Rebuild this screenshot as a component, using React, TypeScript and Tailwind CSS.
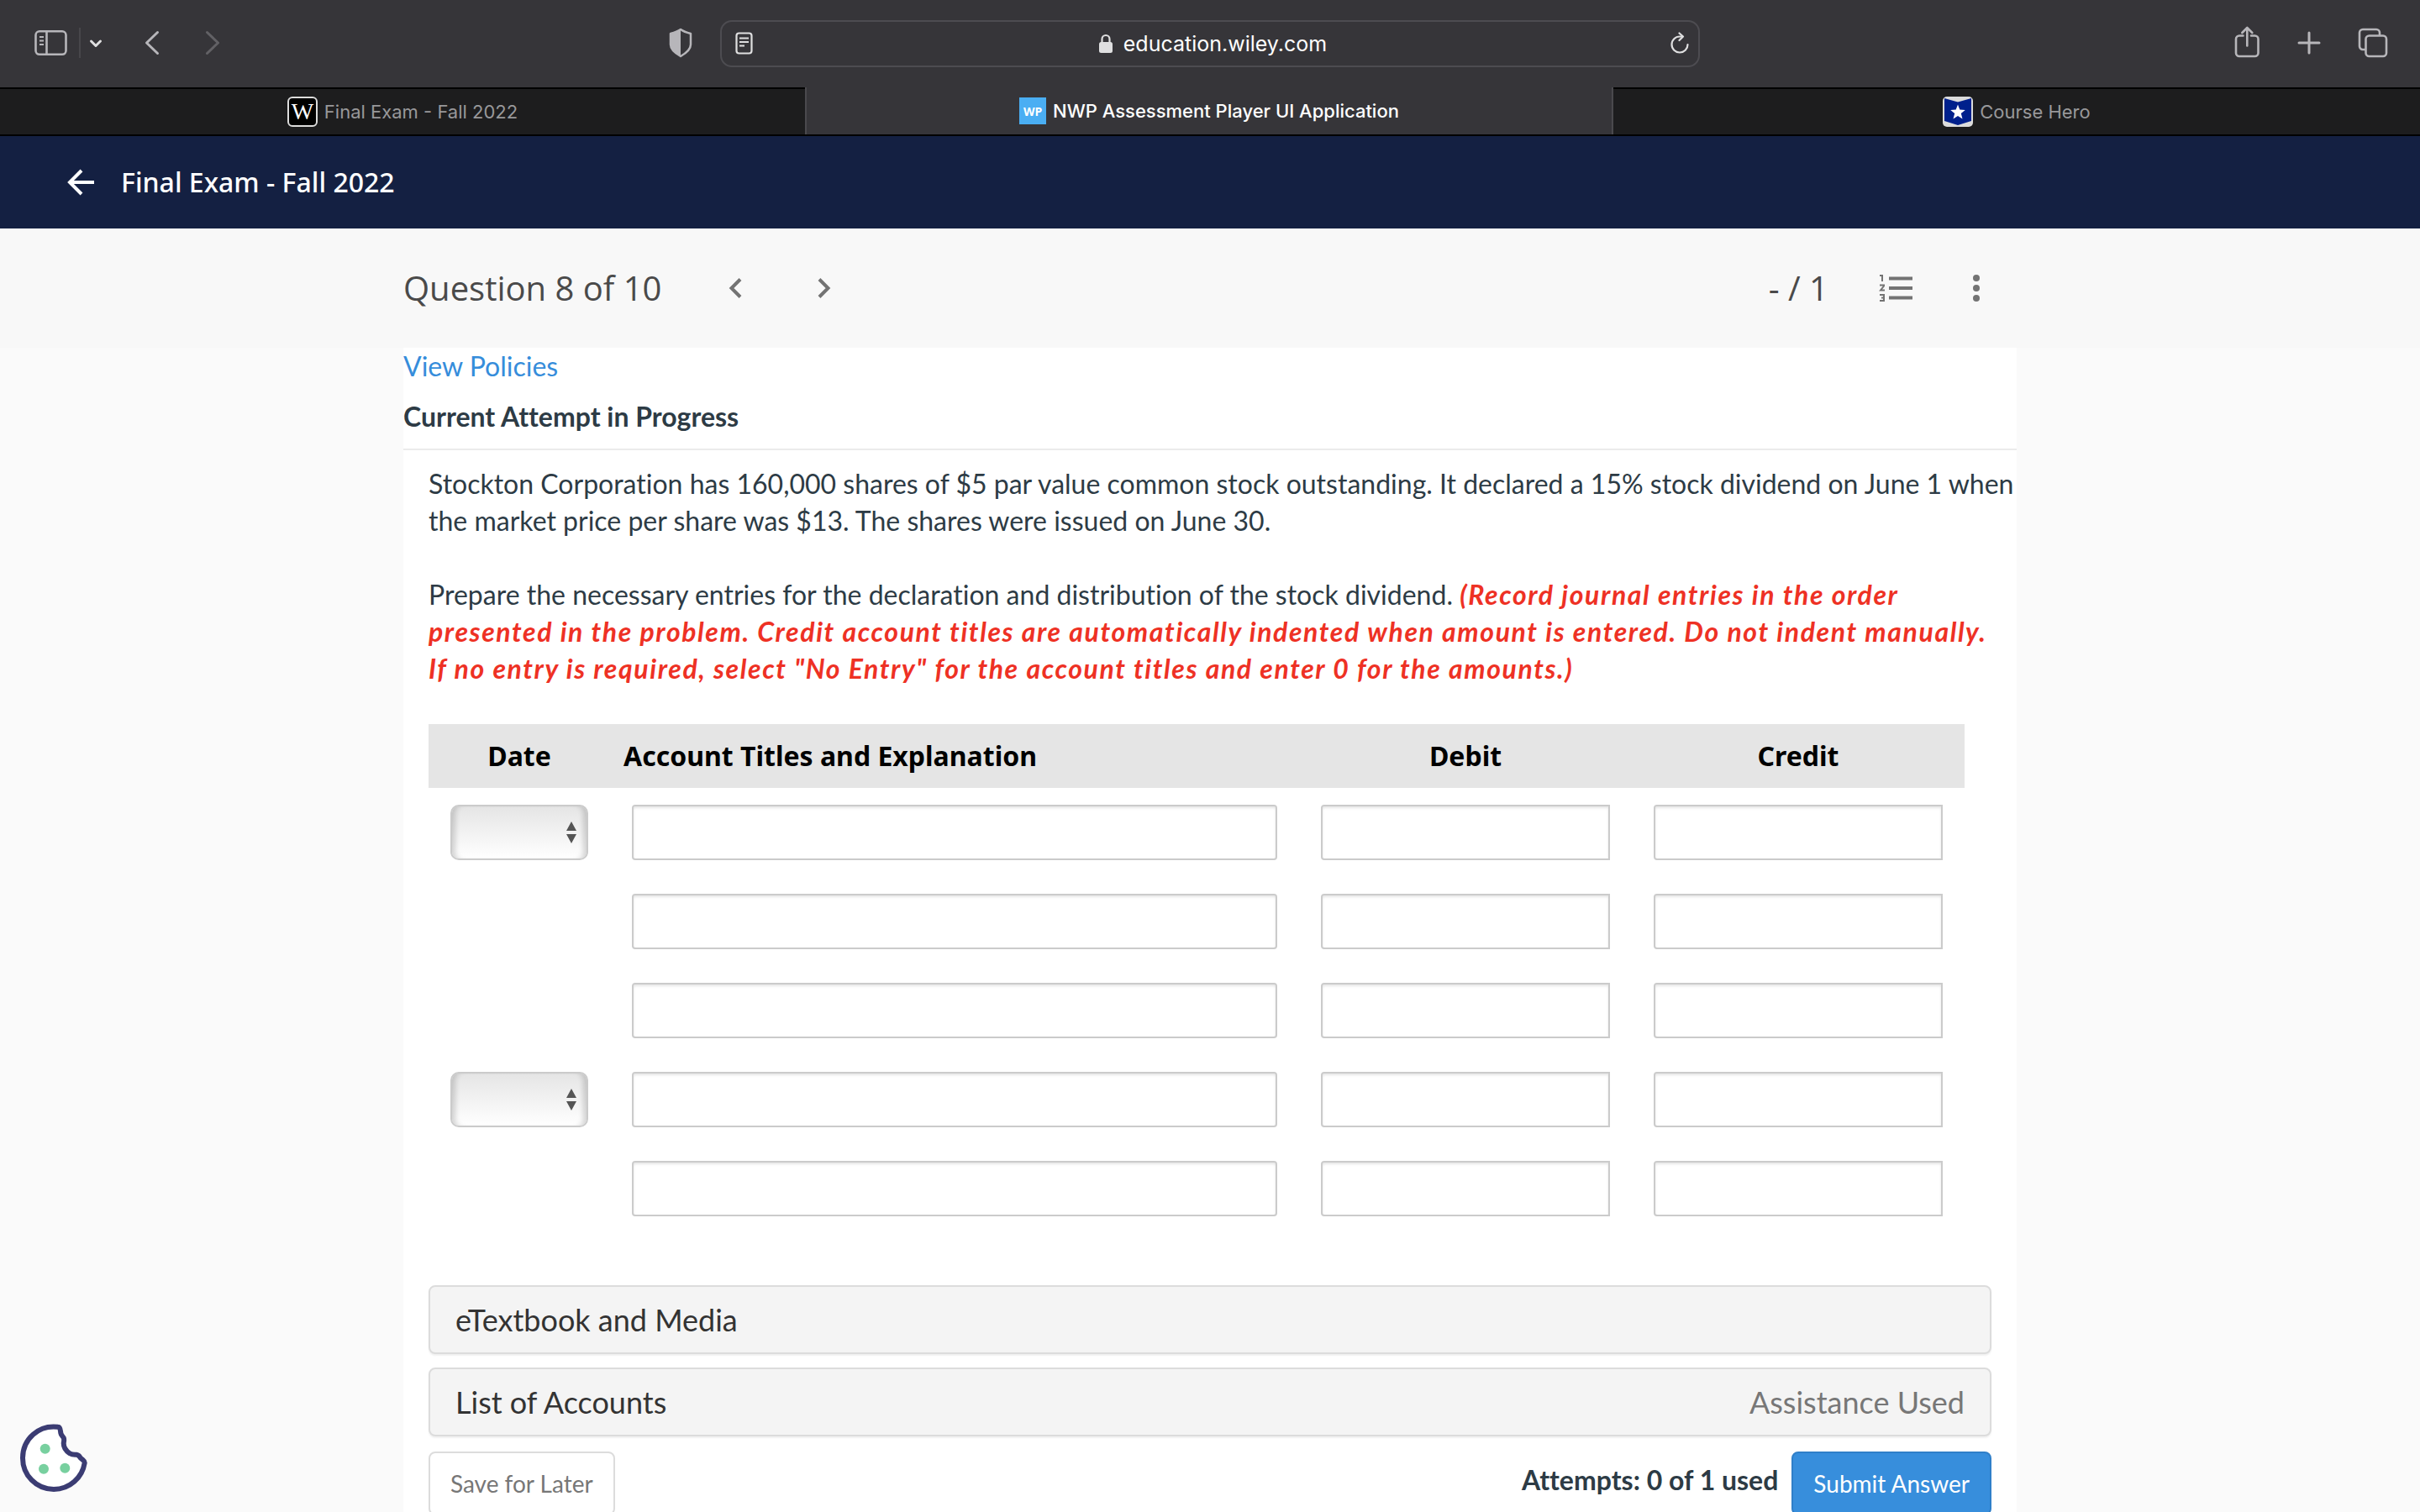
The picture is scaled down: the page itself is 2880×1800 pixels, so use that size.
import type { ReactNode } from 'react';

interface BrowserTabProps {
  title: string;
  icon: ReactNode;
  active?: boolean;
}

interface PanelProps {
  title: string;
  note?: string;
}

// rows that start a new journal entry carry the date drop-down
const journalRows = [
  { id: 1, hasDate: true },
  { id: 2, hasDate: false },
  { id: 3, hasDate: false },
  { id: 4, hasDate: true },
  { id: 5, hasDate: false },
];

const inputClass =
  'block h-[66px] w-full border-2 border-[#cbcbcb] bg-white px-3 text-[28px] shadow-[inset_0_2px_3px_rgba(0,0,0,0.1)] outline-none';

function BrowserToolbar() {
  return (
    <div className="grid h-[104px] shrink-0 grid-cols-[1fr_1166px_1fr] items-center bg-[#363539] text-[#b7b6ba]">
      <div className="flex items-center pb-0.5 pl-10 pr-8">
        <button type="button" aria-label="Show sidebar">
          <svg className="h-8 w-10" viewBox="0 0 40 32" fill="none" stroke="currentColor" strokeWidth="2.6">
            <rect x="2.500" y="2.3" width="36" height="27.500" rx="4.5" />
            <path d="M15.500 2.500v27" />
            <path d="M7 9h5M7 13.500h5M7 18h5" strokeWidth="1.800" />
          </svg>
        </button>
        <span className="ml-[14px] h-9 w-[2px] bg-[#48474b]" />
        <button type="button" aria-label="Tab groups" className="ml-[10px]">
          <svg className="h-4 w-4" viewBox="0 0 16 16" fill="none" stroke="#dfdfe0" strokeWidth="3" strokeLinecap="round" strokeLinejoin="round">
            <path d="M2.500 6 8 11.500 13.500 6" />
          </svg>
        </button>
        <button type="button" aria-label="Back" className="ml-[50px]">
          <svg className="h-8 w-5" viewBox="0 0 20 32" fill="none" stroke="currentColor" strokeWidth="3" strokeLinecap="round" strokeLinejoin="round">
            <path d="M15.500 3.500 2.500 16l13 12.500" />
          </svg>
        </button>
        <button type="button" aria-label="Forward" className="ml-[52px] text-[#626165]">
          <svg className="h-8 w-5" viewBox="0 0 20 32" fill="none" stroke="currentColor" strokeWidth="3" strokeLinecap="round" strokeLinejoin="round">
            <path d="m2.500 3.500 13 12.500-13 12.500" />
          </svg>
        </button>
        <button type="button" aria-label="Privacy report" className="ml-auto">
          <svg className="h-9 w-[30px]" viewBox="0 0 30 36" fill="none">
            <path d="M15 2c4 3 8 4 12 5v13c0 6-5 10-12 14C8 30 3 26 3 20V7c4-1 8-2 12-5Z" stroke="currentColor" strokeWidth="2.500" strokeLinejoin="round" />
            <path d="M15 2v32C8 30 3 26 3 20V7c4-1 8-2 12-5Z" fill="currentColor" />
          </svg>
        </button>
      </div>

      <div className="flex h-14 items-center justify-between rounded-[14px] border-2 border-[#4d4c51] pl-4 pr-[10px] text-[#dfdfe0]">
        <button type="button" aria-label="Reader">
          <svg className="h-7 w-6" viewBox="0 0 24 28" fill="none" stroke="currentColor" strokeWidth="2.200">
            <rect x="1.500" y="1.500" width="18" height="24" rx="3" />
            <path d="M5 7.500h11M5 12h11M5 16.500h6" strokeWidth="2" />
          </svg>
        </button>
        <div className="flex items-center gap-3">
          <svg className="h-6 w-[18px]" viewBox="0 0 18 24" fill="none">
            <rect x="1" y="10" width="16" height="13" rx="2.500" fill="currentColor" />
            <path d="M4.500 11V6.500a4.500 4.500 0 0 1 9 0V11" stroke="currentColor" strokeWidth="2.200" />
          </svg>
          <span className="font-[Inter,sans-serif] text-[25px] leading-8 text-white">education.wiley.com</span>
        </div>
        <button type="button" aria-label="Reload">
          <svg className="h-7 w-6" viewBox="0 0 24 28" fill="none" stroke="currentColor" strokeWidth="2.200" strokeLinecap="round" strokeLinejoin="round">
            <path d="M21.500 15a9.500 9.500 0 1 1-9.500-9.500h3" />
            <path d="m11.500 1.500 4.500 4-4.500 4.500" />
          </svg>
        </button>
      </div>

      <div className="flex items-center justify-end gap-[42px] pb-0.5 pr-[38px]">
        <button type="button" aria-label="Share">
          <svg className="h-10 w-8" viewBox="0 0 32 40" fill="none" stroke="currentColor" strokeWidth="2.600" strokeLinecap="round" strokeLinejoin="round">
            <path d="M11.500 11.500H7a4 4 0 0 0-4 4v16.500a4 4 0 0 0 4 4h18.500a4 4 0 0 0 4-4V15.500a4 4 0 0 0-4-4H21" />
            <path d="M16.300 23.500V2M10.300 8l6-6 6 6" />
          </svg>
        </button>
        <button type="button" aria-label="New tab">
          <svg className="h-8 w-8" viewBox="0 0 32 32" fill="none" stroke="currentColor" strokeWidth="3" strokeLinecap="round">
            <path d="M16 4v24M4 16h24" />
          </svg>
        </button>
        <button type="button" aria-label="Tab overview">
          <svg className="h-9 w-9" viewBox="0 0 36 36" fill="none" stroke="currentColor" strokeWidth="2.600">
            <rect x="9.500" y="9.500" width="24.500" height="24.500" rx="4" />
            <path d="M9.500 26H6a4 4 0 0 1-4-4V6a4 4 0 0 1 4-4h16a4 4 0 0 1 4 4v3.500" />
          </svg>
        </button>
      </div>
    </div>
  );
}

function BrowserTab({ title, icon, active }: BrowserTabProps) {
  return (
    <button
      type="button"
      className={
        active
          ? 'flex items-center justify-center gap-2 border-x-2 border-[#4a494d] bg-[#363539] font-medium text-white'
          : 'flex items-center justify-center gap-2 border-t-2 border-black bg-[#1d1d1e] text-[#98989a]'
      }
    >
      {icon}
      <span className="font-[Inter,sans-serif] text-[22px] leading-7">{title}</span>
    </button>
  );
}

function BrowserTabs() {
  return (
    <div className="grid h-[58px] shrink-0 grid-cols-[958px_1fr_960px] border-b-2 border-black">
      <BrowserTab
        title="Final Exam - Fall 2022"
        icon={
          <span className="flex h-9 w-9 items-center justify-center rounded-md border-2 border-[#dcdcdc] bg-black font-['Liberation_Serif',serif] text-[28px] leading-8 text-white">
            W
          </span>
        }
      />
      <BrowserTab
        title="NWP Assessment Player UI Application"
        active
        icon={
          <span className="flex h-8 w-8 items-center justify-center bg-[#4aaef3] font-['Open_Sans',sans-serif] text-[14px] font-bold text-white">
            WP
          </span>
        }
      />
      <BrowserTab
        title="Course Hero"
        icon={
          <svg className="h-9 w-9" viewBox="0 0 36 36">
            <rect width="36" height="36" rx="5" fill="#dcdcdc" />
            <path d="M2 2l16 4.500L34 2v27l-16 5L2 29Z" fill="#00208c" />
            <path d="m18 9.500 2.300 6 6.500.4-5 4.100 1.700 6.500L18 23l-5.500 3.500 1.700-6.500-5-4.100 6.500-.4Z" fill="#fff" />
          </svg>
        }
      />
    </div>
  );
}

function QuestionBar() {
  return (
    <div className="shrink-0 bg-[#f8f8f8]">
      <div className="mx-auto flex h-[142px] max-w-[1920px] items-center font-['Open_Sans',sans-serif] text-[40px] text-[#4a4a4a]">
        <h2>Question 8 of 10</h2>
        <button type="button" aria-label="Previous question" className="ml-20">
          <svg className="h-6 w-4" viewBox="0 0 16 24" fill="none" stroke="#737373" strokeWidth="4">
            <path d="M14 1.500 3.500 12 14 22.500" />
          </svg>
        </button>
        <button type="button" aria-label="Next question" className="ml-[90px]">
          <svg className="h-6 w-4" viewBox="0 0 16 24" fill="none" stroke="#737373" strokeWidth="4">
            <path d="m2 1.500 10.500 10.500L2 22.500" />
          </svg>
        </button>
        <span className="ml-auto">- / 1</span>
        <button type="button" aria-label="Question list" className="ml-[60px]">
          <svg className="h-8 w-10" viewBox="0 0 40 32" fill="none" stroke="#737373">
            <path d="M12 4.500h28M12 16h28M12 27.500h28" strokeWidth="4" />
            <path d="M1 1h3v7M1 12.500h5v1l-4 5h5M1 24h5v7H1M3 27.500h3" strokeWidth="2" />
          </svg>
        </button>
        <button type="button" aria-label="More options" className="ml-[72px] mr-[44px]">
          <svg className="h-8 w-2" viewBox="0 0 8 32" fill="#737373">
            <circle cx="4" cy="4" r="4" />
            <circle cx="4" cy="16" r="4" />
            <circle cx="4" cy="28" r="4" />
          </svg>
        </button>
      </div>
    </div>
  );
}

function DateSelect({ row }: { row: number }) {
  return (
    <div className="relative">
      <select
        aria-label={`Date, row ${row}`}
        className="block h-[66px] w-full appearance-none rounded-[10px] border-2 border-[#cbcbcb] bg-linear-to-b from-[#e5e5e5] to-white shadow-[inset_8px_0_6px_-4px_rgba(0,0,0,0.16),inset_-8px_0_6px_-4px_rgba(0,0,0,0.16)] outline-none"
      >
        <option></option>
      </select>
      <svg className="pointer-events-none absolute right-[14px] top-5 h-[26px] w-3" viewBox="0 0 12 26" fill="#555">
        <path d="M6 0l6 11H0ZM6 26l6-11H0Z" />
      </svg>
    </div>
  );
}

function JournalTable() {
  return (
    <table className="w-[calc(100%-32px)] table-fixed">
      <colgroup>
        <col className="w-[216px]" />
        <col />
        <col className="w-[396px]" />
        <col className="w-[396px]" />
      </colgroup>
      <thead>
        <tr className="h-[76px] bg-[#e5e5e5] font-['Noto_Sans',sans-serif] text-[32px] text-black">
          <th scope="col">Date</th>
          <th scope="col" className="pl-4 text-left">Account Titles and Explanation</th>
          <th scope="col">Debit</th>
          <th scope="col">Credit</th>
        </tr>
      </thead>
      <tbody>
        {journalRows.map((row) => (
          <tr key={row.id}>
            <td className="px-[26px] py-5">{row.hasDate && <DateSelect row={row.id} />}</td>
            <td className="px-[26px] py-5">
              <input type="text" aria-label={`Account title, row ${row.id}`} className={`${inputClass} rounded`} />
            </td>
            <td className="px-[26px] py-5">
              <input type="text" aria-label={`Debit, row ${row.id}`} className={`${inputClass} rounded-l`} />
            </td>
            <td className="px-[26px] py-5">
              <input type="text" aria-label={`Credit, row ${row.id}`} className={`${inputClass} rounded-l`} />
            </td>
          </tr>
        ))}
      </tbody>
    </table>
  );
}

function Panel({ title, note }: PanelProps) {
  return (
    <button
      type="button"
      className="flex h-[82px] w-full items-center justify-between rounded-lg border-2 border-[#dcdcdc] bg-[#f4f4f4] px-[30px] text-[36px] text-[#333] shadow-[0_2px_2px_rgba(0,0,0,0.06)]"
    >
      <span>{title}</span>
      {note && <span className="text-[#777]">{note}</span>}
    </button>
  );
}

function CookieButton() {
  return (
    <button type="button" aria-label="Cookie settings" className="absolute bottom-[22px] left-[22px]">
      <svg className="h-[84px] w-[84px]" viewBox="0 0 84 84">
        <path
          d="M47 4.800C24 2 5 19 5 41.700 5 62 21 79 42 79c19 0 34-14 36.700-31.500.3-2.500-2.700-3.500-4.700-5.800-1.500-1.700-2-3.700-5-4-3 .3-5 .3-8-1.500-4.500-3-7.300-7-7.300-12 .3-2.500 1-4.500 0-6.500-1.200-2-3-3-3.400-5.700C49.700 8.500 50 5 47 4.800Z"
          fill="#fff"
          stroke="#3b3c73"
          strokeWidth="6"
          strokeLinejoin="round"
        />
        <circle cx="31.700" cy="30.700" r="6" fill="#78d09f" />
        <circle cx="30" cy="54.700" r="6" fill="#78d09f" />
        <circle cx="55.300" cy="53.700" r="6" fill="#78d09f" />
      </svg>
    </button>
  );
}

export default function App() {
  return (
    <div className="relative flex h-screen flex-col overflow-hidden bg-[#fafafa] font-[Lato,sans-serif]">
      <BrowserToolbar />
      <BrowserTabs />

      <header className="flex h-[110px] shrink-0 items-center gap-8 bg-[#142042] pl-20 font-['Noto_Sans',sans-serif] text-[32px] font-medium text-white">
        <button type="button" aria-label="Go back">
          <svg className="h-8 w-8" viewBox="0 0 32 32" fill="none" stroke="currentColor" strokeWidth="4">
            <path d="M32 16H4M17 2 3 16l14 14" />
          </svg>
        </button>
        <h1>Final Exam - Fall 2022</h1>
      </header>

      <QuestionBar />

      <main className="mx-auto w-full max-w-[1920px] grow bg-white text-[32px] leading-[44px] text-[#2d3b45] [font-variant-ligatures:none]">
        <div className="border-b-2 border-[#ebebeb] pb-4">
          <a href="#policies" className="block text-[#368ddb]">View Policies</a>
          <p className="mt-4 font-bold">Current Attempt in Progress</p>
        </div>

        <div className="pl-[30px] pt-[18px]">
          <p>
            Stockton Corporation has 160,000 shares of $5 par value common stock outstanding. It declared a 15% stock
            dividend on June 1 when <br />
            the market price per share was $13. The shares were issued on June 30.
          </p>
          <p className="mt-11">
            Prepare the necessary entries for the declaration and distribution of the stock dividend.{' '}
            <em className="font-bold tracking-wider text-[#ee3124]">
              (Record journal entries in the order <br />
              presented in the problem. Credit account titles are automatically indented when amount is entered. Do not
              indent manually. <br />
              If no entry is required, select "No Entry" for the account titles and enter 0 for the amounts.)
            </em>
          </p>
        </div>

        <div className="px-[30px] pt-11">
          <JournalTable />

          <div className="mt-[62px] flex flex-col gap-4">
            <Panel title="eTextbook and Media" />
            <Panel title="List of Accounts" note="Assistance Used" />
          </div>

          <div className="mt-[18px] flex items-start">
            <button type="button" className="h-[76px] rounded-lg border-2 border-[#dcdcdc] px-6 text-[28px] text-[#777]">
              Save for Later
            </button>
            <span className="ml-auto mt-3 font-bold">Attempts: 0 of 1 used</span>
            <button type="button" className="ml-4 h-[76px] rounded-lg border-2 border-[#2f7fc9] bg-[#378edc] px-6 text-[28px] text-white">
              Submit Answer
            </button>
          </div>
        </div>
      </main>

      <CookieButton />
    </div>
  );
}
